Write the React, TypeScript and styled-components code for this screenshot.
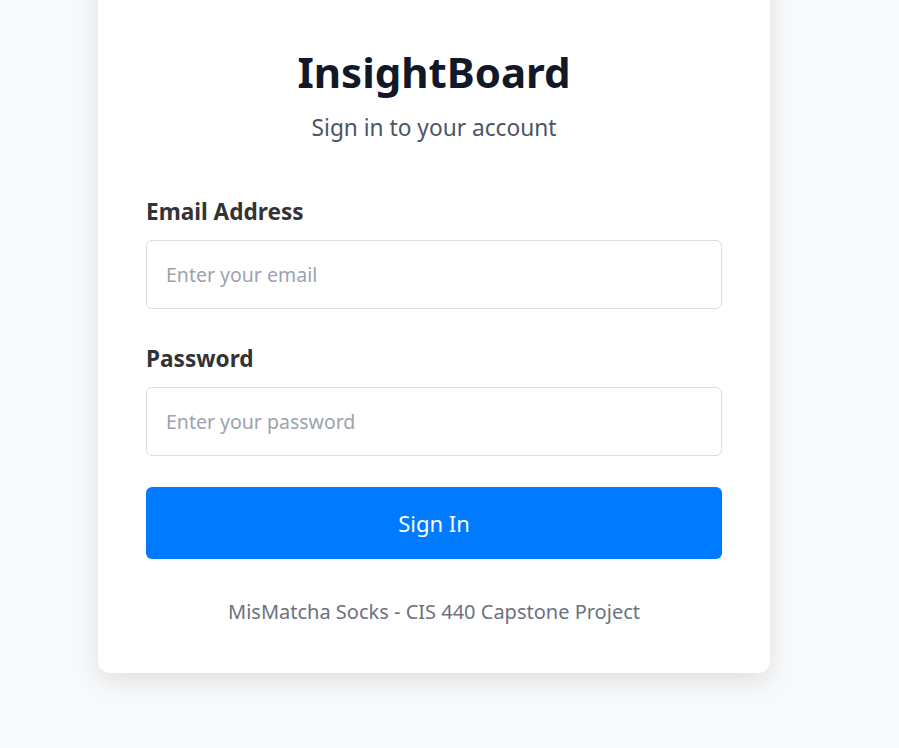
import React from "react";
import styled, { createGlobalStyle } from "styled-components";

const Global = createGlobalStyle`
  html, body { margin: 0; padding: 0; background: #f8f9fb; }
  body { font-family: "Noto Sans", "Open Sans", sans-serif; }
  * { box-sizing: border-box; }
`;

const Page = styled.div`
  min-height: 748px;
  display: flex;
  justify-content: flex-start;
  padding-left: 98px;
  overflow: hidden;
`;

const Card = styled.div`
  width: 672px;
  margin-top: -40px;
  background: #ffffff;
  border-radius: 12px;
  box-shadow: 0 8px 24px rgba(0, 0, 0, 0.1);
  padding: 84px 48px 47px;
  display: flex;
  flex-direction: column;
  align-self: flex-start;
`;

const Header = styled.div`
  text-align: center;
  margin-bottom: 54px;
`;

const Title = styled.h1`
  margin: 0;
  font-size: 42px;
  line-height: 56px;
  font-weight: 700;
  color: #111827;
`;

const Subtitle = styled.p`
  margin: 12px 0 0;
  font-size: 22.7px;
  line-height: 32px;
  color: #4b5563;
`;

const Field = styled.div<{ $spacing: number }>`
  display: flex;
  flex-direction: column;
  gap: 14px;
  margin-bottom: ${(p) => p.$spacing}px;
`;

const Label = styled.label`
  font-size: 22.6px;
  line-height: 28px;
  font-weight: 700;
  color: #333333;
`;

const Input = styled.input`
  height: 69px;
  width: 100%;
  padding: 0 19px;
  border: 1px solid #dddddd;
  border-radius: 6px;
  font-family: inherit;
  font-size: 19.5px;
  color: #333;
  background: #fff;
  outline: none;
  &::placeholder { color: #9ca3af; }
`;

const Button = styled.button`
  height: 72px;
  width: 100%;
  border: none;
  border-radius: 6px;
  background: #007bff;
  color: #ffffff;
  font-family: inherit;
  font-size: 22px;
  cursor: pointer;
`;

const Footer = styled.p`
  margin: 39px 0 0;
  text-align: center;
  font-size: 20px;
  line-height: 28px;
  color: #6b7280;
`;

export default function App() {
  return (
    <>
      <Global />
      <Page>
        <Card>
          <Header>
            <Title>InsightBoard</Title>
            <Subtitle>Sign in to your account</Subtitle>
          </Header>
          <Field $spacing={36}>
            <Label htmlFor="email">Email Address</Label>
            <Input id="email" type="email" placeholder="Enter your email" />
          </Field>
          <Field $spacing={31}>
            <Label htmlFor="password">Password</Label>
            <Input id="password" type="password" placeholder="Enter your password" />
          </Field>
          <Button type="button">Sign In</Button>
          <Footer>MisMatcha Socks - CIS 440 Capstone Project</Footer>
        </Card>
      </Page>
    </>
  );
}
